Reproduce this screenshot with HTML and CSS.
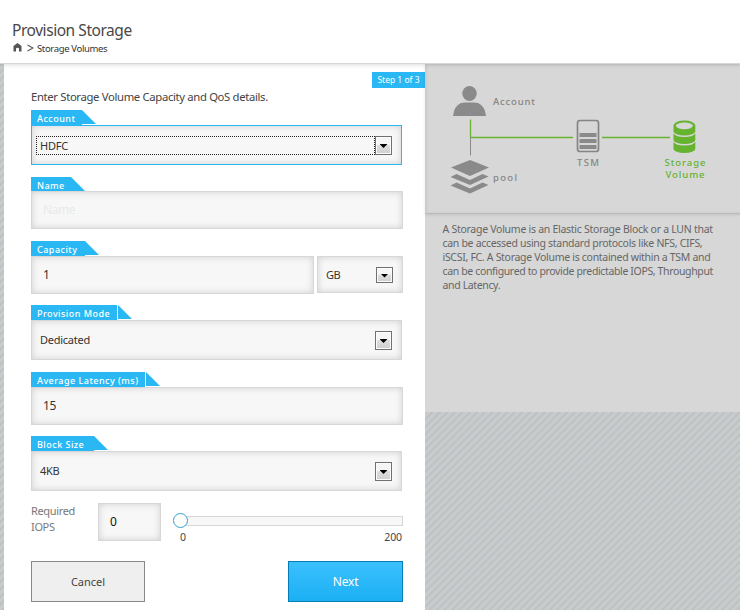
FILE: index.html
```html
<!DOCTYPE html>
<html lang="en">
<head>
<meta charset="utf-8">
<title>Provision Storage</title>
<link rel="stylesheet" href="styles.css">
</head>
<body>
<header class="header">
  <h1>Provision Storage</h1>
  <nav class="crumbs">
    <svg width="9" height="9" viewBox="0 0 9 9"><path d="M4.500 0 8.500 3v5.500H6V5.800Q6 4.800 4.500 4.800T3 5.800v2.700H.500V3Z" fill="#555"/></svg>
    <svg class="chev" width="7" height="8" viewBox="0 0 7 8"><path d="M.5 1 6 4 .5 7" fill="none" stroke="#555" stroke-width="1.1"/></svg>
    <span>Storage Volumes</span>
  </nav>
</header>
<main class="main">
  <section class="form">
    <div class="step"><span>Step 1 of 3</span></div>
    <p class="intro">Enter Storage Volume Capacity and QoS details.</p>

    <div class="group account">
      <div class="tag"><label class="w51">Account</label><i></i></div>
      <div class="box select active"><span class="focus">HDFC</span><b class="arrow"></b></div>
    </div>
    <div class="group name">
      <div class="tag"><label class="w40">Name</label><i></i></div>
      <div class="box input hint">Name</div>
    </div>
    <div class="group capacity">
      <div class="tag"><label class="w54">Capacity</label><i></i></div>
      <div class="row"><div class="box input amount">1</div><div class="box unit"><span>GB</span><b class="arrow"></b></div></div>
    </div>
    <div class="group mode">
      <div class="tag gap"><label class="w86">Provision Mode</label><i></i></div>
      <div class="box select"><span>Dedicated</span><b class="arrow"></b></div>
    </div>
    <div class="group latency">
      <div class="tag gap"><label class="w114">Average Latency (ms)</label><i></i></div>
      <div class="box input">15</div>
    </div>
    <div class="group block">
      <div class="tag"><label class="w63">Block Size</label><i></i></div>
      <div class="box select"><span>4KB</span><b class="arrow"></b></div>
    </div>

    <div class="iops">
      <div class="iops-label">Required<br>IOPS</div>
      <div class="box input iops-value">0</div>
      <div class="slider">
        <div class="track"><span class="knob"></span></div>
        <div class="scale"><span>0</span><span>200</span></div>
      </div>
    </div>
    <div class="buttons">
      <div class="btn cancel">Cancel</div>
      <div class="btn next">Next</div>
    </div>
  </section>
  <aside class="side">
    <svg class="diagram" width="315" height="149" viewBox="425 64 315 149">
      <g fill="#8a8a8a">
        <ellipse cx="469.500" cy="93.500" rx="7.200" ry="7.500"/>
        <path d="M453 116Q454 106 461 103Q463 102.500 465 102.500H474Q476 102.500 478 103Q485 106 486 116Z"/>
        <path d="m470 160 19 7.500-19 8.500-19-8.500Z"/>
        <path d="m450.500 177 6-3 13.500 6 12.500-6 6 2.500L470 185Z"/>
        <path d="m450.500 185.500 6-3 13.500 6 12.500-6 6 2.500L470 193.500Z"/>
        <path d="M579.500 133h17v4h-17zM579.500 139h17v4h-17zM579.500 145h17v4h-17z"/>
      </g>
      <path d="M470.500 137v18.500" stroke="#8a8a8a"/>
      <path d="M470.500 119.500V137M471 137.500h102M602 137.500h68" stroke="#6ab52f" stroke-width="1.300" fill="none"/>
      <rect x="577.500" y="120.500" width="21" height="31" rx="2.500" fill="none" stroke="#858585" stroke-width="1.700"/>
      <g fill="#65b32e">
        <path d="M673.500 125.500A10.750 5 0 0 1 695.300 125.500V131.500A10.750 4 0 0 1 673.500 131.500Z"/>
        <path d="M673.500 133.500Q676 137 684.400 137T695.300 133.500V140A10.750 4 0 0 1 673.500 140Z"/>
        <path d="M673.500 142Q676 145.500 684.400 145.500T695.300 142V149A10.750 4 0 0 1 673.500 149Z"/>
      </g>
      <ellipse cx="684.400" cy="125.800" rx="8.500" ry="3.400" fill="#d7d7d7"/>
      <g class="node-text">
        <text x="493" y="105" textLength="42">Account</text>
        <text x="493" y="181" textLength="24">pool</text>
        <text x="577" y="165.500" textLength="22">TSM</text>
        <g class="on"><text x="664.500" y="165.500" textLength="41">Storage</text><text x="665.500" y="178" textLength="39">Volume</text></g>
      </g>
    </svg>
    <p class="about"><span class="a1">A Storage Volume is an Elastic Storage Block or a LUN that</span><span class="a2">can be accessed using standard protocols like NFS, CIFS,</span><span class="a3">iSCSI, FC. A Storage Volume is contained within a TSM and</span><span>can be configured to provide predictable IOPS, Throughput</span><span>and Latency.</span></p>
  </aside>
</main>
</body>
</html>
```
FILE: styles.css
```css
* { box-sizing: border-box; }
body {
  margin: 0; width: 740px; height: 610px; overflow: hidden;
  font: 11px/16px "Noto Sans", "Open Sans", sans-serif; color: #333;
  background: repeating-linear-gradient(135deg, #c9cccd 0 2px, #bec2c4 3px 4.200px, #c9cccd 5.300px);
}
.header { position: relative; height: 64px; padding: 20px 0 0 12px; background: #fff; border-bottom: 1px solid #d6d6d6; box-shadow: 0 1px 4px rgba(0,0,0,.14); }
h1 { margin: 0; font-size: 15.500px; line-height: 21px; font-weight: 400; color: #484848; letter-spacing: -.45px; }
.crumbs { display: flex; align-items: center; height: 14px; padding-left: 1px; font-size: 9.500px; line-height: 14px; letter-spacing: -.35px; }
.crumbs svg { margin-bottom: 1px; }
.crumbs span { padding-top: 1px; }
.chev { margin: 0 3px 0 5px; }
.main { display: flex; height: 546px; padding-left: 4px; }
.form { width: 421px; background: #fff; padding: 8px 0 0 27px; }
.step { width: 53px; height: 16px; margin-left: auto; background: #2ab8f5; color: #fff; font-size: 8.500px; line-height: 16px; text-align: center; white-space: nowrap; }
.intro { margin: 1px 0 5px; height: 16px; font-size: 11.300px; white-space: nowrap; letter-spacing: -.34px; color: #444; }
.group { width: 372px; }
.account, .mode, .block { height: 67px; }
.name, .capacity, .latency { height: 64px; }
.name .tag { height: 14px; }
.tag { display: flex; height: 15px; }
.tag label { height: 100%; padding-left: 6px; background: #2ab8f5; color: #fff; font-size: 9px; font-weight: 500; line-height: 17px; letter-spacing: .48px; white-space: nowrap; }
.tag i { width: 14px; height: 14px; background: #2ab8f5; clip-path: polygon(0 0, 100% 100%, 0 100%); }
.gap i { margin-left: 1px; }
.w51 { width: 51px; } .w40 { width: 40px; } .w54 { width: 54px; } .w86 { width: 86px; } .w114 { width: 114px; } .w63 { width: 63px; }
.box { display: flex; align-items: center; background: #f7f7f7; border: 1px solid #d8d6d6; box-shadow: inset 0 0 7px rgba(0,0,0,.16); }
.select { width: 371px; height: 40px; padding: 0 9px 0 8px; justify-content: space-between; letter-spacing: -.25px; }
.active { border-color: #2ab8f5; padding-left: 4px; }
.focus { flex: 1; height: 19px; padding-left: 3px; border: 1px dotted #222; line-height: 17px; }
.input { height: 38px; padding-left: 11px; font-size: 12px; letter-spacing: -.4px; }
.hint { color: #e9e9e9; }
.row { display: flex; gap: 3px; }
.amount { width: 283px; }
.unit { width: 86px; height: 37px; padding: 0 9px 0 8px; justify-content: space-between; letter-spacing: -.4px; }
.arrow { display: grid; place-items: center; width: 17px; height: 19px; border: 1px solid #707070; background: linear-gradient(#f5f5f5 0 45%, #dedede 50%, #cfcfcf); box-shadow: inset 0 0 0 1px #fcfcfc; }
.unit .arrow { height: 16px; }
.arrow::before { content: ""; width: 8px; height: 4px; margin-top: 2px; background: #000; clip-path: polygon(0 0, 100% 0, 50% 100%); }
.iops { display: flex; width: 372px; height: 58px; }
.iops-label { width: 67px; color: #777; letter-spacing: -.35px; }
.iops-value { width: 63px; font-size: 12px; color: #111; }
.slider { flex: 1; padding: 13px 0 0 19px; }
.track { position: relative; height: 10px; background: #f7f7f7; border: 1px solid #d8d6d6; }
.knob { position: absolute; left: -8px; top: -4px; width: 15px; height: 15px; border: 1.500px solid #35a0cf; border-radius: 50%; background: #fff; }
.scale { display: flex; justify-content: space-between; padding: 3px 1px 0 0; font-size: 10.500px; color: #444; letter-spacing: -.1px; }
.buttons { display: flex; justify-content: space-between; width: 372px; }
.btn { display: grid; place-items: center; height: 41px; }
.cancel { width: 114px; background: #efefef; border: 1px solid #888; color: #444; }
.next { width: 115px; color: #fff; background: linear-gradient(#3bc0fd, #1bb0f3); border: 1px solid #087db5; font-size: 12px; letter-spacing: -.2px; }
.side { width: 315px; height: 348px; background: #d7d7d7; }
.diagram { display: block; height: 150px; width: 315px; border-bottom: 1px solid #bcbcbc; box-shadow: inset 2px 0 3px rgba(0,0,0,.06), 0 1px 3px rgba(0,0,0,.1); }
.node-text { font-size: 9.500px; fill: #858585; font-weight: 500; }
.on { fill: #65b32e; }
.about { margin: 8px 0 0 17.500px; font-size: 10.500px; line-height: 14px; color: #666; white-space: nowrap; letter-spacing: -.36px; }
.about span { display: block; }
.a1 { letter-spacing: -.27px; }
.a2, .a3 { letter-spacing: -.3px; }
```
